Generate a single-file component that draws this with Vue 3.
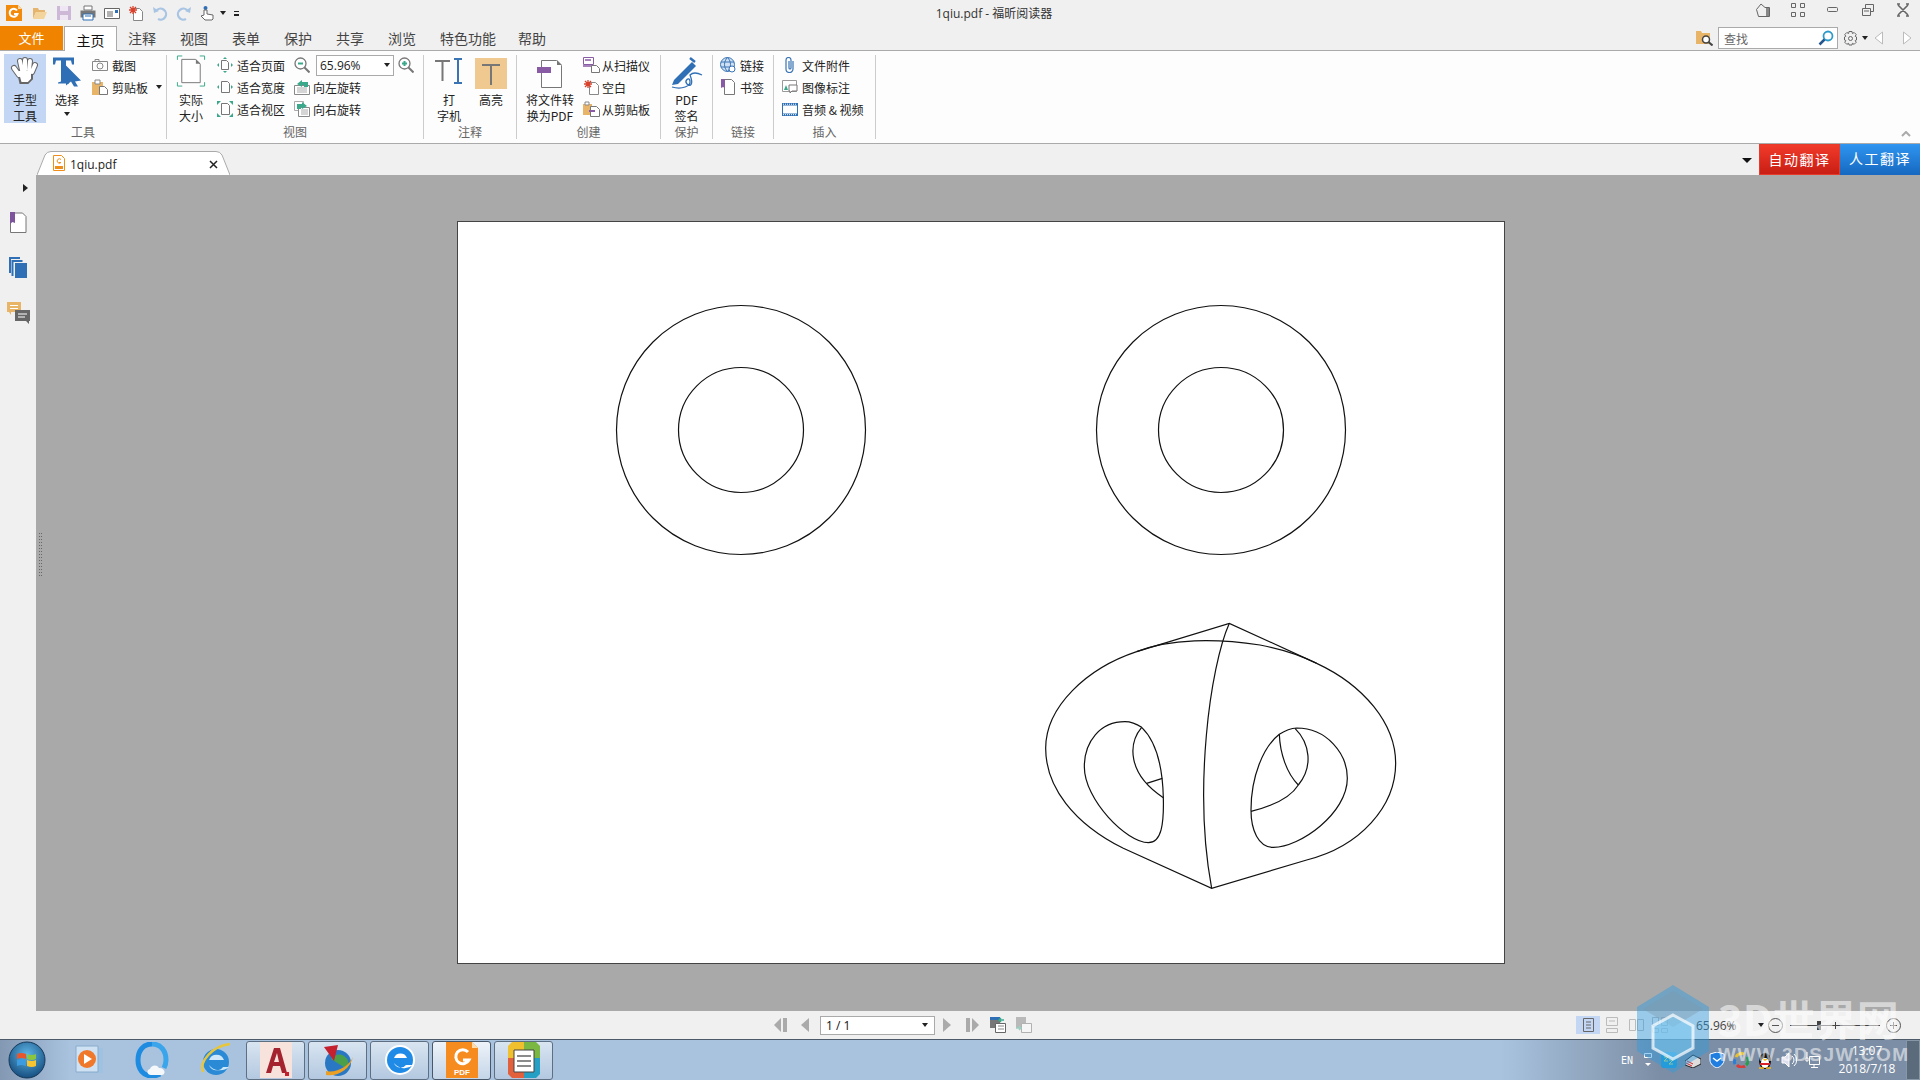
<template>
  <div class="app">
    <!-- title bar -->
    <div class="titlebar">
      <div class="qat">
        <svg class="logo" width="16" height="16" viewBox="0 0 16 16"><path d="M0 0h12l4 4v12H0z" fill="#f28a0c"/><path d="M12 0l4 4h-4z" fill="#fbd9a8"/><path d="M11 5.5a4 4 0 1 0 .5 3.5H8" fill="none" stroke="#fff" stroke-width="2"/></svg>
        <svg width="16" height="16" viewBox="0 0 16 16"><path d="M1 3h5l1 2h6v2H4L1 14z" fill="#e5b56d"/><path d="M1 14l3-7h11l-3 7z" fill="#f3d49c"/></svg>
        <svg width="16" height="16" viewBox="0 0 16 16"><path d="M1 1h14v14H1z" fill="#cdb8d8"/><path d="M4 1h8v5H4z" fill="#eee6f2"/><path d="M4 10h8v5H4z" fill="#eee6f2"/></svg>
        <svg width="16" height="16" viewBox="0 0 16 16"><path d="M4 1h8v4H4z" fill="#fff" stroke="#777"/><path d="M0.500 5.500h15v7h-15z" fill="#777"/><path d="M3 9h10v6H3z" fill="#fff" stroke="#2f6fb5"/><path d="M5 11h6" stroke="#2f6fb5"/></svg>
        <svg width="16" height="16" viewBox="0 0 16 16"><path d="M.5 3.500h15v10H.5z" fill="#fff" stroke="#666"/><path d="M3 7h6M3 9h6M3 11h6" stroke="#666"/><path d="M11 5h3v3h-3z" fill="#2f6fb5"/></svg>
        <svg width="16" height="16" viewBox="0 0 16 16"><path d="M5.500 3.500h6l3 3v9h-9z" fill="#fff" stroke="#888"/><path d="M5 1v8M1 5h8M2 2l6 6M8 2l-6 6" stroke="#d9412b" stroke-width="1.300"/></svg>
        <svg width="16" height="16" viewBox="0 0 16 16"><path d="M4 6a5.500 5.500 0 1 1 2 8" fill="none" stroke="#a9c5e4" stroke-width="2.200"/><path d="M1 2l1 6 5-2z" fill="#a9c5e4"/></svg>
        <svg width="16" height="16" viewBox="0 0 16 16"><path d="M12 6a5.500 5.500 0 1 0-2 8" fill="none" stroke="#a9c5e4" stroke-width="2.200"/><path d="M15 2l-1 6-5-2z" fill="#a9c5e4"/></svg>
        <svg width="16" height="16" viewBox="0 0 16 16"><circle cx="5.500" cy="3" r="2" fill="#2f6fb5"/><path d="M4 5h3v4l6 1v4l-1 1H5l-4-4 3-1z" fill="#fff" stroke="#666"/></svg>
        <i class="caret caret-qat"></i>
        <span class="qat-more"></span>
      </div>
      <div class="doc-title">1qiu.pdf - 福昕阅读器</div>
      <div class="winctl">
        <svg width="14" height="14" viewBox="0 0 14 14"><path d="M.5 6.500L5 1l4 3.500h4.500v9H2.500z" fill="none" stroke="#666"/><path d="M10 5h3v8h-3z" fill="#888"/></svg>
        <svg width="14" height="14" viewBox="0 0 14 14" fill="none" stroke="#666"><path d="M.5.500h4v4h-4zM9.500.500h4v4h-4zM.5 9.500h4v4h-4zM9.500 9.500h4v4h-4z"/></svg>
        <svg width="14" height="14" viewBox="0 0 14 14" fill="none" stroke="#666"><rect x="1.500" y="4.500" width="10" height="4" rx="1"/></svg>
        <svg width="14" height="14" viewBox="0 0 14 14" fill="none" stroke="#666"><path d="M1.500 5.500h8v7h-8zM4.500 5V1.500h8v7H10"/><path d="M3 8h5" /></svg>
        <svg width="14" height="14" viewBox="0 0 14 14" fill="none" stroke="#666" stroke-width="1.600"><path d="M2 2l10 10M12 2L2 12M1 1h3M10 1h3M1 13h3M10 13h3"/></svg>
      </div>
    </div>

    <!-- menu row -->
    <div class="menubar">
      <div class="file-tab">文件</div>
      <div class="home-tab">主页</div>
      <div v-for="m in menus" :key="m" class="menu-item">{{ m }}</div>
      <div class="menu-right">
        <svg width="17" height="16" viewBox="0 0 17 16"><path d="M0 1h5l1 2h8v11H0z" fill="#e8b468"/><circle cx="10" cy="9.500" r="3.500" fill="#fff" stroke="#444" stroke-width="1.500"/><path d="M12.500 12l4 3.500" stroke="#444" stroke-width="2"/></svg>
        <div class="search">
          <span>查找</span>
          <svg width="16" height="16" viewBox="0 0 16 16"><circle cx="10" cy="6" r="4.500" fill="#fff" stroke="#2e9ac9" stroke-width="1.800"/><path d="M6.500 9.500L1.500 14.500" stroke="#23568f" stroke-width="2.500"/></svg>
        </div>
        <svg class="gear" width="15" height="15" viewBox="0 0 15 15" fill="none" stroke="#666"><circle cx="7.500" cy="7.500" r="2"/><path d="M6 .5h3l.4 2 1.800-1 2 2-1 1.800 1.300.7v3l-1.300.5 1 1.800-2 2-1.800-1-.4 1.700H6l-.4-1.700-1.800 1-2-2 1-1.800-1.300-.5V6l1.300-.7-1-1.800 2-2 1.800 1z"/></svg>
        <i class="caret"></i>
        <svg class="back" width="10" height="14" viewBox="0 0 10 14"><path d="M8.500 1v12L1 7z" fill="#fff" stroke="#bbb"/></svg>
        <svg class="fwd" width="10" height="14" viewBox="0 0 10 14"><path d="M1.500 1v12L9 7z" fill="#fff" stroke="#bbb"/></svg>
      </div>
    </div>

    <!-- ribbon -->
    <div class="ribbon">
      <section class="group g-tools">
        <div class="body">
          <div class="tall hand">
            <svg class="ico" width="30" height="30" viewBox="0 0 30 30" fill="none" stroke-linecap="round">
              <g stroke="#666" stroke-width="6"><path d="M4 13l5 7M10 6l2 9M15 5v10M20 6l-1 9M25 10l-3 7"/><path d="M10 17h10v6l-3 3h-5z" fill="#666"/></g>
              <g stroke="#fff" stroke-width="4"><path d="M4 13l5 7M10 6l2 9M15 5v10M20 6l-1 9M25 10l-3 7"/><path d="M11 18h8v5l-2 2h-4z" fill="#fff"/></g>
            </svg>
            <span>手型</span><span>工具</span>
          </div>
          <div class="tall select">
            <svg class="ico" width="29" height="30" viewBox="0 0 29 30"><path d="M0 1h21v7h-2l-1-4h-5v21l3 1v1H5v-1l3-1V4H3L2 8H0z" fill="#2f6fb5"/><path d="M13 9l15 15-6 1 3 5h-4l-3-5-5 4z" fill="#2f6fb5"/></svg>
            <span>选择</span>
            <i class="caret caret-under"></i>
          </div>
          <div class="col col-tools">
            <div class="srow">
              <svg width="16" height="14" viewBox="0 0 16 14" fill="none" stroke="#888"><path d="M.5 3.500h15v9H.5z"/><circle cx="8" cy="8" r="3"/><path d="M3 3V1.500h4V3"/></svg>
              <span>截图</span>
            </div>
            <div class="srow">
              <svg width="16" height="16" viewBox="0 0 16 16"><path d="M0 3h11v13H0z" fill="#e8b468"/><path d="M3 1h5v4H3z" fill="#fff" stroke="#888"/><path d="M7.500 7.500h5l3 3v5h-8z" fill="#fff" stroke="#777"/></svg>
              <span>剪贴板</span>
              <i class="caret caret-clip"></i>
            </div>
          </div>
        </div>
        <div class="label">工具</div>
      </section>

      <section class="group g-view">
        <div class="body">
          <div class="tall actual">
            <svg class="ico" width="30" height="34" viewBox="0 0 30 34" fill="none">
              <path d="M1 5V1h5M24 1h5v4M1 28v4h5M24 32h5v-4" stroke="#3aa88a"/>
              <path d="M5.500 4.500h14l5 5v19h-19z" fill="#fff" stroke="#777"/><path d="M20 4l5 5h-5z" fill="#777"/>
            </svg>
            <span>实际</span><span>大小</span>
          </div>
          <div class="col col-fit">
            <div class="srow"><svg width="16" height="16" viewBox="0 0 16 16"><path d="M4.500 3.500h5l2 2v7h-7z" fill="#fff" stroke="#777"/><path d="M8 0l2 2H6zM8 16l-2-2h4zM0 8l2-2v4zM16 8l-2-2v4z" fill="#3aa88a"/></svg><span>适合页面</span></div>
            <div class="srow"><svg width="16" height="16" viewBox="0 0 16 16"><path d="M4.500 2.500h6l2 2v9h-8z" fill="#fff" stroke="#777"/><path d="M0 8l2-2v4zM16 8l-2-2v4z" fill="#3aa88a"/></svg><span>适合宽度</span></div>
            <div class="srow"><svg width="16" height="16" viewBox="0 0 16 16"><path d="M4.500 2.500h6l2 2v9h-8z" fill="#fff" stroke="#777"/><path d="M0 0h4L0 4zM16 0v4l-4-4zM0 16v-4l4 4zM16 16h-4l4-4z" fill="#3aa88a"/></svg><span>适合视区</span></div>
          </div>
          <div class="col col-zoom">
            <div class="srow">
              <svg width="16" height="16" viewBox="0 0 16 16"><circle cx="6.500" cy="6.500" r="5.500" fill="#fff" stroke="#777" stroke-width="1.300"/><path d="M4 6.500h5" stroke="#3aa88a" stroke-width="2"/><path d="M10.500 10.500l5 5" stroke="#777" stroke-width="2"/></svg>
              <div class="zoombox"><span>65.96%</span><i class="caret"></i></div>
              <svg width="16" height="16" viewBox="0 0 16 16"><circle cx="6.500" cy="6.500" r="5.500" fill="#fff" stroke="#777" stroke-width="1.300"/><path d="M4 6.500h5M6.500 4v5" stroke="#3aa88a" stroke-width="2"/><path d="M10.500 10.500l5 5" stroke="#777" stroke-width="2"/></svg>
            </div>
            <div class="srow"><svg width="16" height="16" viewBox="0 0 16 16"><path d="M.5 6.500h15v9H.5z" fill="#fff" stroke="#888"/><path d="M3 9h10M3 11h10M3 13h10" stroke="#aaa"/><path d="M3 5l5-4v2h6v5h-4V6H8v2z" fill="#3aa88a"/></svg><span>向左旋转</span></div>
            <div class="srow"><svg width="16" height="16" viewBox="0 0 16 16"><path d="M.5.500h9v9h-9z" fill="#fff" stroke="#aaa"/><path d="M4.500 6.500h11v9h-11z" fill="#fff" stroke="#888"/><path d="M7 9h7M7 11h7M7 13h7" stroke="#aaa"/><path d="M13 5L8 1v2H3v5h4V6h1v2z" fill="#3aa88a"/></svg><span>向右旋转</span></div>
          </div>
        </div>
        <div class="label">视图</div>
      </section>

      <section class="group g-annot">
        <div class="body">
          <div class="tall typewriter">
            <svg class="ico" width="30" height="26" viewBox="0 0 30 26" fill="none"><path d="M1 3h15M8.500 3v20" stroke="#777" stroke-width="2"/><path d="M20 1h8M20 25h8M24 1v24" stroke="#3a74b5" stroke-width="2"/></svg>
            <span>打</span><span>字机</span>
          </div>
          <div class="tall highlight">
            <div class="hl-box"><svg width="20" height="24" viewBox="0 0 20 24" fill="none" stroke="#777" stroke-width="2"><path d="M1 3h18M10 3v20"/></svg></div>
            <span>高亮</span>
          </div>
        </div>
        <div class="label">注释</div>
      </section>

      <section class="group g-create">
        <div class="body">
          <div class="tall topdf">
            <svg class="ico" width="26" height="30" viewBox="0 0 26 30"><path d="M4.500 1.500h15l5 5v22h-20z" fill="#fff" stroke="#777"/><path d="M20 1l5 5h-5z" fill="#777"/><path d="M0 8h14v6H0z" fill="#8a5ba5"/></svg>
            <span>将文件转</span><span>换为PDF</span>
          </div>
          <div class="col col-create">
            <div class="srow"><svg width="17" height="16" viewBox="0 0 17 16"><path d="M.5.500h10v7H.5z" fill="#fff" stroke="#8a5ba5"/><path d="M2 3h6M0 9h10" stroke="#8a5ba5" stroke-width="1.500"/><path d="M8.500 8.500h5l3 3v4h-8z" fill="#fff" stroke="#777"/></svg><span>从扫描仪</span></div>
            <div class="srow"><svg width="17" height="16" viewBox="0 0 17 16"><path d="M6.500 3.500h6l3 3v9h-9z" fill="#fff" stroke="#888"/><path d="M5 1v8M1 5h8M2 2l6 6M8 2l-6 6" stroke="#d9412b" stroke-width="1.300"/></svg><span>空白</span></div>
            <div class="srow"><svg width="17" height="16" viewBox="0 0 17 16"><path d="M0 3h9v11H0z" fill="#e8b468"/><path d="M2 1h4v3H2z" fill="#fff" stroke="#888"/><path d="M7.500 5.500h6l3 3v7h-9z" fill="#fff" stroke="#777"/><path d="M6 10h6" stroke="#8a5ba5" stroke-width="2"/></svg><span>从剪贴板</span></div>
          </div>
        </div>
        <div class="label">创建</div>
      </section>

      <section class="group g-protect">
        <div class="body">
          <div class="tall sign">
            <svg class="ico" width="32" height="33" viewBox="0 0 32 33" fill="none"><path d="M3 23L21 5l4 4L7 27l-6 1z" fill="#2f6fb5"/><path d="M19 1l5 4" stroke="#2f6fb5" stroke-width="2.500"/><path d="M1 30c10 3 19-1 18-6s-6 0-3 3 7 1 3-9c3-3 8-2 12 0" stroke="#2f6fb5" stroke-width="1.300"/></svg>
            <span>PDF</span><span>签名</span>
          </div>
        </div>
        <div class="label">保护</div>
      </section>

      <section class="group g-link">
        <div class="body">
          <div class="col col-link">
            <div class="srow"><svg width="16" height="16" viewBox="0 0 16 16" fill="none"><circle cx="7.500" cy="7.500" r="7" fill="#cfe0f2" stroke="#3a74b5"/><path d="M1 5h13M1 10h13M7.500 .5c-4 4-4 10 0 14M7.500 .5c4 4 4 10 0 14" stroke="#3a74b5"/><circle cx="12" cy="12" r="3" fill="#fff" stroke="#3a74b5"/></svg><span>链接</span></div>
            <div class="srow"><svg width="16" height="16" viewBox="0 0 16 16"><path d="M4.500 .5h7l3 3v12h-10z" fill="#fff" stroke="#777"/><path d="M1 0h4v9L3 8 1 9z" fill="#8a5ba5"/></svg><span>书签</span></div>
          </div>
        </div>
        <div class="label">链接</div>
      </section>

      <section class="group g-insert">
        <div class="body">
          <div class="col col-insert">
            <div class="srow"><svg width="16" height="16" viewBox="0 0 16 16" fill="none"><path d="M11 4v8a3.500 3.500 0 0 1-7 0V3a2.300 2.300 0 0 1 5 0v8a1 1 0 0 1-2 0V4" stroke="#3a74b5" stroke-width="1.200"/></svg><span>文件附件</span></div>
            <div class="srow"><svg width="16" height="16" viewBox="0 0 16 16"><path d="M.5 1.500h14v11H.5z" fill="#fff" stroke="#999"/><path d="M2 11l2-5 2 5z" fill="#3aa88a"/><path d="M7 6h8v6h-5l-2 2v-2H7z" fill="#fff" stroke="#777"/></svg><span>图像标注</span></div>
            <div class="srow"><svg width="16" height="13" viewBox="0 0 16 13"><path d="M.5 .5h15v12H.5z" fill="#fff" stroke="#2f6fb5"/><path d="M0 0h16v2.500H0zM0 10.500h16V13H0z" fill="#2f6fb5"/><path d="M1 1.200h14M1 11.700h14" stroke="#fff" stroke-dasharray="1 1"/></svg><span class="av">音频 &amp; 视频</span></div>
          </div>
        </div>
        <div class="label">插入</div>
      </section>
      <svg class="collapse" width="10" height="6" viewBox="0 0 10 6" fill="none" stroke="#aaa" stroke-width="2"><path d="M1 5l4-4 4 4"/></svg>
    </div>

    <!-- document tabs -->
    <div class="tabstrip">
      <div class="doc-tab">
        <svg class="tabshape" width="193" height="24" viewBox="0 0 193 24"><path d="M0 24L8 4q2-3.500 6-3.500h165q4 0 6 3.500l8 20" fill="#fff" stroke="#aaa"/></svg>
        <svg class="tab-ico" width="12" height="16" viewBox="0 0 12 16"><path d="M.5.500h8l3 3v12H.5z" fill="#fff" stroke="#ef8f1a"/><path d="M8 4.500a2.200 2.200 0 1 0 0 3H6" fill="none" stroke="#ef8f1a"/><path d="M2 11h8v3H2z" fill="#ef8f1a"/></svg>
        <span class="tab-name">1qiu.pdf</span>
        <svg class="tab-x" width="9" height="9" viewBox="0 0 9 9" stroke="#222" stroke-width="1.500"><path d="M1 1l7 7M8 1L1 8"/></svg>
      </div>
      <i class="caret caret-tabs"></i>
      <div class="btn-red">自动翻译</div>
      <div class="btn-blue">人工翻译</div>
    </div>

    <!-- main -->
    <div class="main">
      <aside class="side">
        <i class="side-arrow"></i>
        <svg width="18" height="22" viewBox="0 0 18 22"><path d="M1.500 1h12l3.500 3.500v16H1.500z" fill="#fff" stroke="#777"/><path d="M1 0h5v11L3.500 10 1 12z" fill="#7e559c"/></svg>
        <svg width="18" height="22" viewBox="0 0 18 22"><path d="M0 0h11v2H2v14H0z" fill="#2f6fb5"/><path d="M2.500 3h11v2h-9v14h-2z" fill="#2f6fb5"/><path d="M6 6h12v15H6z" fill="#2f6fb5"/></svg>
        <svg width="23" height="23" viewBox="0 0 23 23"><path d="M0 0h14v10H4v3l-2-3H0z" fill="#e8b468"/><path d="M3 3.500h8M3 6.500h8" stroke="#fff"/><path d="M8 8h15v11h-1v3l-3-3H8z" fill="#666"/><path d="M11 12h9M11 15h7" stroke="#fff"/></svg>
      </aside>
      <div class="viewer">
        <div class="grip"></div>
        <div class="page">
          <svg width="1046" height="741" viewBox="458 222 1046 741" fill="none" stroke="#111" stroke-width="1.200">
            <circle cx="741" cy="430" r="124.500"/>
            <circle cx="741" cy="430" r="62.500"/>
            <circle cx="1221" cy="430" r="124.500"/>
            <circle cx="1221" cy="430" r="62.500"/>
            <g transform="translate(1030 610) scale(.33333)" stroke-width="3.600">
              <path d="M320 125C420 85 560 85 690 105C760 118 820 140 860 160C1000 225 1097 340 1097 460C1097 590 990 710 830 750L545 835L280 715C130 640 47 530 47 415C47 290 170 175 320 125Z"/>
              <path d="M320 125L598 40L860 160"/>
              <path d="M598 40C540 170 490 540 545 835"/>
              <path d="M285 335C210 335 163 395 163 470C163 570 290 698 355 698C395 698 402 640 400 563C398 480 385 400 335 352C320 342 305 335 285 335Z"/>
              <path d="M335 352C295 400 290 490 400 563"/>
              <path d="M350 520L397 505"/>
              <path d="M800 354C890 354 952 430 952 505C952 610 810 712 730 712C685 712 663 660 663 600C663 500 700 410 748 373C765 362 780 355 800 354Z"/>
              <path d="M795 355C840 400 850 470 805 525"/>
              <path d="M748 373C750 430 770 490 805 525"/>
              <path d="M663 604C720 590 780 565 805 525"/>
            </g>
          </svg>
        </div>
      </div>
    </div>

    <!-- status bar -->
    <div class="statusbar">
      <div class="nav">
        <svg width="13" height="14" viewBox="0 0 13 14" fill="#aaa"><path d="M7 0v14L0 7z"/><path d="M9 0h4v14H9z" /></svg>
        <svg class="n-prev" width="8" height="14" viewBox="0 0 8 14" fill="#aaa"><path d="M8 0v14L0 7z"/></svg>
        <div class="pagebox"><span>1 / 1</span><i class="caret"></i></div>
        <svg class="n-next" width="8" height="14" viewBox="0 0 8 14" fill="#aaa"><path d="M0 0v14l8-7z"/></svg>
        <svg class="n-last" width="13" height="14" viewBox="0 0 13 14" fill="#aaa"><path d="M0 0h4v14H0z"/><path d="M6 0v14l7-7z"/></svg>
        <svg class="n-two" width="16" height="16" viewBox="0 0 16 16"><path d="M0 0h10v11H0z" fill="#777"/><path d="M0 0h10v3H0z" fill="#2f6fb5"/><path d="M5.500 6.500h10v9h-10z" fill="#fff" stroke="#666"/><path d="M8 9h6M8 12h6" stroke="#888"/><path d="M14 3H9M11 1L9 3l2 2" stroke="#3aa88a" stroke-width="1.500" fill="none"/></svg>
        <svg class="n-three" width="16" height="16" viewBox="0 0 16 16" opacity=".45"><path d="M0 0h10v11H0z" fill="#777"/><path d="M5.500 6.500h10v9h-10z" fill="#fff" stroke="#666"/><path d="M0 11h5M3 9l2 2-2 2" stroke="#3aa88a" stroke-width="1.500" fill="none"/></svg>
      </div>
      <div class="view-modes">
        <div class="vm vm-on"><svg width="11" height="14" viewBox="0 0 11 14" fill="none" stroke="#666"><path d="M.5.500h10v13H.5zM3 4h5M3 7h5M3 10h5"/></svg></div>
        <div class="vm"><svg width="12" height="16" viewBox="0 0 12 16" fill="none" stroke="#bbb"><path d="M.5.500h11v8H.5zM.5 11.500h11v4H.5zM3 4h6"/></svg></div>
        <div class="vm"><svg width="15" height="12" viewBox="0 0 15 12" fill="none" stroke="#bbb"><path d="M.5.500h6v11h-6zM8.500.500h6v11h-6z"/></svg></div>
        <div class="vm"><svg width="16" height="16" viewBox="0 0 16 16" fill="none" stroke="#bbb"><path d="M.5.500h6v8h-6zM9.500.500h6v8h-6zM.5 11.500h6v4h-6zM9.500 11.500h6v4h-6z"/></svg></div>
      </div>
      <span class="pct">65.96%</span>
      <i class="caret caret-pct"></i>
      <svg width="15" height="15" viewBox="0 0 15 15" fill="none" stroke="#555"><circle cx="7.500" cy="7.500" r="7"/><path d="M4 7.500h7"/></svg>
      <div class="slider"><span class="thumb"></span><span class="tick"></span></div>
      <svg width="15" height="15" viewBox="0 0 15 15" fill="none" stroke="#555"><circle cx="7.500" cy="7.500" r="7"/><path d="M4 7.500h7M7.500 4v7"/></svg>
    </div>

    <!-- windows taskbar -->
    <div class="taskbar">
      <svg class="orb" width="38" height="38" viewBox="0 0 38 38">
        <defs><radialGradient id="orbg" cx=".5" cy=".35" r=".75"><stop offset="0" stop-color="#5db5e6"/><stop offset="1" stop-color="#0b3f70"/></radialGradient></defs>
        <circle cx="19" cy="19" r="18" fill="url(#orbg)" stroke="#16385a"/>
        <path d="M9 13q4-2 9 0v5q-5-2-9 0z" fill="#e8562d"/><path d="M19 13q5 2 9 0v5q-4 2-9 0z" fill="#8cc63f"/>
        <path d="M9 19q4-2 9 0v6q-5-2-9 0z" fill="#3d9be0"/><path d="M19 19q5 2 9 0v6q-4 2-9 0z" fill="#f6c531"/>
      </svg>
      <div class="pin pin-media"><svg width="30" height="30" viewBox="0 0 30 30"><path d="M8 3h22v25H8z" fill="#9fc2e0"/><path d="M3 1h22v26H3z" fill="#cfe2f3" stroke="#88aacc"/><circle cx="14" cy="14" r="9" fill="#f0782a"/><path d="M11 9l8 5-8 5z" fill="#fff"/></svg></div>
      <div class="pin pin-q"><svg width="34" height="36" viewBox="0 0 34 36"><path d="M17 2C8 2 3 9 3 18s5 16 14 16c3 0 6-1 8-2" fill="none" stroke="#1c8be0" stroke-width="5"/><path d="M17 2c9 0 14 7 14 16 0 3-1 6-2 8" fill="none" stroke="#3aa5ea" stroke-width="5"/><path d="M16 33c-4 0-5-5-1-6 1-4 7-5 9-1 5-1 8 6 3 7z" fill="#f4f8fb"/></svg></div>
      <div class="pin pin-ie"><svg width="34" height="36" viewBox="0 0 34 36"><circle cx="18" cy="20" r="13" fill="#2a8ad6"/><path d="M11 18h15a8 8 0 0 0-15 0zM11 23a8 8 0 0 0 14 2h6a14 14 0 0 1-20-2z" fill="#cfe8f9"/><path d="M5 30C1 20 14 4 32 2" fill="none" stroke="#e8c63c" stroke-width="2.500"/></svg></div>
      <div class="tbtn"><svg width="32" height="36" viewBox="0 0 32 36"><path d="M0 0h32v36H0z" fill="#f7e3dc"/><path d="M6 31L14 6h6l7 25h-5l-2-7h-7l-2 7zM14 20h5l-2-9z" fill="#a5232e" fill-rule="evenodd"/><path d="M25 30h4v4h-4z" fill="#c4202e"/></svg></div>
      <div class="tbtn"><svg width="32" height="34" viewBox="0 0 32 34"><circle cx="16" cy="20" r="13" fill="#2a78c4"/><path d="M9 16a9 9 0 0 1 16 10z" fill="#4aa04a"/><path d="M2 4l14-2-4 16z" fill="#c4202e"/><path d="M4 28c10 3 24-6 27-14-3 12-15 20-27 18z" fill="#eb9f25"/></svg></div>
      <div class="tbtn"><svg width="32" height="34" viewBox="0 0 32 34"><circle cx="16" cy="17" r="15" fill="#fff"/><circle cx="16" cy="17" r="13" fill="#1f8be6"/><path d="M10 15h13a7 7 0 0 0-13 0zM10 20a7 7 0 0 0 12 2h7a13 13 0 0 1-19-2z" fill="#fff"/></svg></div>
      <div class="tbtn tbtn-on"><svg width="32" height="36" viewBox="0 0 32 36"><path d="M0 0h26l6 6v30H0z" fill="#f68b1f"/><path d="M26 0l6 6h-6z" fill="#fddcb0"/><path d="M22 10a7 7 0 1 0 1 8h-6" fill="none" stroke="#fff" stroke-width="3"/><text x="16" y="33" font-size="8" font-weight="700" fill="#fff" text-anchor="middle" font-family="Liberation Sans">PDF</text></svg></div>
      <div class="tbtn"><svg width="32" height="36" viewBox="0 0 32 36"><path d="M4 0h12v16H0V4z" fill="#f1c02e"/><path d="M16 0h12l4 4v12H16z" fill="#7bb743"/><path d="M0 16h16v20H4l-4-4z" fill="#e2603c"/><path d="M16 16h16v16l-4 4H16z" fill="#25a0c4"/><path d="M6 8h20v22H6z" fill="#fff" stroke="#444"/><path d="M9 14h14M9 19h14M9 24h14" stroke="#666" stroke-width="1.500"/></svg></div>
      <div class="tray">
        <span class="en">EN</span>
        <svg width="10" height="16" viewBox="0 0 10 16"><path d="M1.500 1.500h7v4h-7z" fill="none" stroke="#fff"/><path d="M2 11h6l-3 3z" fill="#fff"/></svg>
        <svg width="16" height="16" viewBox="0 0 16 16"><rect width="16" height="16" rx="3" fill="#1d9bd8"/><path d="M3 5h4L3 9h4M8 8h4l-4 4h4" fill="none" stroke="#d8e86a"/></svg>
        <svg width="16" height="16" viewBox="0 0 16 16"><path d="M0 9l8-6 8 4v5l-8 4-8-3z" fill="#ddd" stroke="#222"/><path d="M1 11l6 3M2 9l6 3" stroke="#d22"/></svg>
        <svg width="16" height="16" viewBox="0 0 16 16"><path d="M8 0l7 2v6c0 4-4 7-7 8-3-1-7-4-7-8V2z" fill="#1f7ee0" stroke="#fff"/><path d="M4 6l4 3 4-3" fill="none" stroke="#fff" stroke-width="1.500"/></svg>
        <svg width="16" height="16" viewBox="0 0 16 16" fill="none" stroke-width="3"><path d="M3 5a6 6 0 0 1 8-3" stroke="#e6c12d"/><path d="M14 5a6 6 0 0 1-1 8" stroke="#2a9d4a"/><path d="M12 14a6 6 0 0 1-8-1" stroke="#d93a3a"/><path d="M2 12a6 6 0 0 1 0-5" stroke="#2a7ed6"/></svg>
        <svg width="16" height="17" viewBox="0 0 16 17"><ellipse cx="8" cy="9" rx="6" ry="8" fill="#111"/><ellipse cx="8" cy="11" rx="4" ry="5" fill="#fff"/><path d="M5 7h6l-3 2z" fill="#f5b81e"/><path d="M3 11h10v2H3z" fill="#d8232a"/><path d="M2 16h5M9 16h5" stroke="#f5b81e" stroke-width="1.500"/></svg>
        <svg width="16" height="16" viewBox="0 0 16 16" fill="none" stroke="#fff"><path d="M1 5h3l4-4v14l-4-4H1z" fill="#dde"/><path d="M11 4a5 5 0 0 1 0 8M13 2a8 8 0 0 1 0 12"/></svg>
        <svg width="16" height="16" viewBox="0 0 16 16" fill="none" stroke="#fff"><path d="M4.500 4.500h10v8h-10zM9 13v2M6 15.500h7M2 0v6M1 6h2v3H1z"/></svg>
      </div>
      <div class="clock"><span>13:07</span><span>2018/7/18</span></div>
      <div class="show-desktop"></div>
    </div>

    <!-- site watermark over the screenshot -->
    <div class="watermark">
      <svg class="wm-logo" width="72" height="88" viewBox="0 0 72 88">
        <path d="M36 0l36 22v44L36 88 0 66V22z" fill="#2f9be0" opacity=".45"/>
        <path d="M36 6l30 18L36 42 6 24z" fill="#7f98ad" opacity=".4"/>
        <path d="M36 30l20 11v22L36 74 16 63V41z" fill="#7cc9f0" opacity=".55"/>
        <path d="M36 30l20 11v22L36 74 16 63V41z" fill="none" stroke="#fff" stroke-width="3" opacity=".7"/>
      </svg>
      <div class="wm-text">
        <div class="wm-big">3D世界网</div>
        <div class="wm-small">WWW.3DSJW.COM</div>
      </div>
    </div>
  </div>
</template>

<script setup>
const menus = ['注释', '视图', '表单', '保护', '共享', '浏览', '特色功能', '帮助']
</script>

<style>
html, body { margin: 0; padding: 0; background: #f0f0f0; }
</style>

<style scoped>
* { box-sizing: border-box; }

.app {
  position: relative;
  width: 1920px;
  height: 1080px;
  overflow: hidden;
  display: flex;
  flex-direction: column;
  background: #f0f0f0;
  color: #222;
  font-family: "Noto Sans CJK SC", "Noto Sans", sans-serif;
  font-size: 12px;
}

svg { display: block; flex: none; }

.caret {
  display: block;
  flex: none;
  width: 0;
  height: 0;
  border-left: 3.5px solid transparent;
  border-right: 3.5px solid transparent;
  border-top: 4px solid #222;
}

/* title bar */
.titlebar {
  height: 26px;
  display: flex;
  align-items: center;
  position: relative;
}

.qat {
  display: flex;
  align-items: center;
  gap: 8px;
  padding-left: 6px;
}

.qat .logo { margin-right: 2px; }
.caret-qat { margin-left: -4px; }

.qat-more {
  width: 5px;
  height: 5px;
  border-top: 1px solid #222;
  background: linear-gradient(#222, #222) center 2px / 5px 3px no-repeat;
}

.doc-title {
  position: absolute;
  left: 0;
  right: 0;
  text-align: center;
  padding-left: 68px;
  font-family: "Open Sans", "Noto Sans CJK SC", sans-serif;
  font-size: 12px;
  color: #333;
}

.winctl {
  margin-left: auto;
  display: flex;
  gap: 21px;
  padding-right: 10px;
  margin-top: -6px;
}

/* menu row */
.menubar {
  height: 25px;
  display: flex;
  align-items: stretch;
  border-bottom: 1px solid #aaa;
  font-size: 14px;
}

.file-tab {
  width: 63px;
  background: #f08300;
  color: #fff;
  text-align: center;
  line-height: 24px;
  font-size: 13px;
}

.home-tab {
  width: 53px;
  margin-left: 1px;
  margin-right: -1px;
  margin-bottom: -1px;
  background: #fff;
  border: 1px solid #aaa;
  border-bottom: none;
  text-align: center;
  line-height: 26px;
  color: #111;
}

.menu-item {
  padding: 0 12px;
  line-height: 25px;
  color: #444;
}

.menu-item:nth-last-child(2) { margin-left: -2px; }

.menu-right {
  margin-left: auto;
  display: flex;
  align-items: center;
  padding-right: 8px;
}

.search {
  width: 120px;
  height: 22px;
  margin-left: 5px;
  padding: 0 3px 0 5px;
  display: flex;
  align-items: center;
  justify-content: space-between;
  background: #fff;
  border: 1px solid #aaa;
  font-size: 12px;
  color: #666;
}

.gear { margin-left: 5px; }
.menu-right .caret { margin-left: 4px; }
.back { margin-left: 6px; }
.fwd { margin-left: 18px; }

/* ribbon */
.ribbon {
  position: relative;
  height: 93px;
  padding-top: 4px;
  display: flex;
  background: #fdfdfd;
  border-bottom: 1px solid #aaa;
}

.group {
  height: 84px;
  flex: none;
  border-right: 1px solid #ccc;
  display: flex;
  flex-direction: column;
}

.g-tools { width: 167px; }
.g-view { width: 257px; }
.g-annot { width: 93px; }
.g-create { width: 144px; }
.g-protect { width: 52px; }
.g-link { width: 61px; }
.g-insert { width: 102px; }

.body {
  height: 70px;
  display: flex;
}

.label {
  text-align: center;
  line-height: 14px;
  color: #666;
}

.tall {
  display: flex;
  flex-direction: column;
  align-items: center;
  flex: none;
  line-height: 16px;
}

.tall .ico {
  height: 37px;
  padding-bottom: 4px;
}

.hand {
  width: 42px;
  height: 69px;
  margin: -1px 0 0 4px;
  background: #c3d6f3;
  padding-top: 1px;
}

.hand .ico { height: 30px; margin-bottom: 7px; padding: 0; }

.select { width: 30px; margin-left: 6px; }
.caret-under { margin-top: 4px; }

.col { display: flex; flex-direction: column; margin-top: -1px; }

.srow {
  height: 22px;
  display: flex;
  align-items: center;
  gap: 4px;
  white-space: nowrap;
}

.col-tools { margin-left: 10px; }
.caret-clip { margin-left: 4px; }

.actual { width: 34px; margin-left: 7px; }
.col-fit { margin-left: 9px; width: 77px; }
.col-zoom .srow { gap: 3px; }

.zoombox {
  width: 78px;
  height: 21px;
  margin: 0 1px 0 3px;
  padding: 0 3px;
  display: flex;
  align-items: center;
  justify-content: space-between;
  background: #fff;
  border: 1px solid #aaa;
  font-family: "Open Sans", sans-serif;
}

.typewriter { width: 30px; margin-left: 10px; }
.typewriter .ico { height: 37px; padding: 3px 0 8px; }

.highlight { width: 32px; margin-left: 11px; }

.hl-box {
  width: 32px;
  height: 31px;
  margin: 3px 0 3px;
  display: flex;
  align-items: center;
  justify-content: center;
  background: #efc98f;
}

.topdf { width: 54px; margin-left: 6px; }
.topdf .ico { padding: 4px 0 3px; }
.topdf span { white-space: nowrap; }
.col-create { margin-left: 6px; }
.col-create .srow { gap: 2px; }

.sign { width: 51px; }
.sign .ico { padding: 2px 0 2px; }

.col-link { margin-left: 7px; }
.col-insert { margin-left: 8px; }

.collapse {
  position: absolute;
  right: 9px;
  top: 80px;
}

/* tabs */
.tabstrip {
  height: 31px;
  display: flex;
  align-items: flex-end;
}

.doc-tab {
  position: relative;
  width: 193px;
  height: 24px;
  margin-left: 37px;
  display: flex;
  align-items: center;
  padding-left: 16px;
}

.tabshape { position: absolute; left: 0; top: 0; }
.tab-ico, .tab-name, .tab-x { position: relative; }

.tab-name {
  margin-left: 5px;
  padding-top: 3px;
  font-family: "Open Sans", sans-serif;
  font-size: 12px;
}

.tab-x { margin-left: auto; margin-right: 12px; margin-top: 3px; }

.caret-tabs {
  margin: 0 7px 12px auto;
  border-left-width: 5px;
  border-right-width: 5px;
  border-top-width: 5px;
  border-top-color: #111;
}

.btn-red, .btn-blue {
  width: 81px;
  height: 31px;
  text-align: center;
  line-height: 29px;
  font-size: 14px;
  letter-spacing: 1.500px;
  color: #fff;
}

.btn-red { background: linear-gradient(#f03a2a, #c91e14); border: 1px solid #e63a2a; }
.btn-blue { width: 80px; background: linear-gradient(#2f95f0, #1668c0); }

/* main */
.main {
  height: 836px;
  display: flex;
}

.side {
  width: 36px;
  display: flex;
  flex-direction: column;
  align-items: center;
  padding-top: 9px;
}

.side-arrow {
  width: 0;
  height: 0;
  margin-left: 15px;
  border-top: 4.500px solid transparent;
  border-bottom: 4.500px solid transparent;
  border-left: 5px solid #222;
  margin-bottom: 20px;
}

.side svg { margin-bottom: 23px; }

.viewer {
  position: relative;
  flex: 1;
  background: #a9a9a9;
  padding: 47px 0 0 422px;
}

.grip {
  position: absolute;
  left: 3px;
  top: 358px;
  width: 3px;
  height: 44px;
  background-image:
    repeating-linear-gradient(#666 0 1px, transparent 1px 3px),
    repeating-linear-gradient(#666 0 1px, transparent 1px 3px);
  background-size: 1px 100%;
  background-position: 0 0, 2px 0;
  background-repeat: no-repeat;
}

.page {
  width: 1046px;
  height: 741px;
  background: #fff;
  outline: 1px solid #444;
}

/* status bar */
.statusbar {
  height: 29px;
  display: flex;
  align-items: center;
  padding-left: 774px;
  border-bottom: 1px solid #4c5a68;
  font-family: "Open Sans", sans-serif;
}

.nav { display: flex; align-items: center; }
.n-prev { margin-left: 14px; }

.pagebox {
  width: 115px;
  height: 19px;
  margin-left: 11px;
  padding: 0 6px 0 5px;
  display: flex;
  align-items: center;
  justify-content: space-between;
  background: #fff;
  border: 1px solid #aaa;
  color: #111;
}

.n-next { margin-left: 8px; }
.n-last { margin-left: 15px; }
.n-two { margin-left: 11px; }
.n-three { margin-left: 10px; }

.view-modes {
  display: flex;
  align-items: center;
  margin-left: 544px;
}

.vm {
  width: 24px;
  height: 18px;
  display: flex;
  align-items: center;
  justify-content: center;
}

.vm-on { background: #c3d6f3; }

.pct { margin-left: 24px; width: 44px; color: #444; }
.caret-pct { margin: 0 4px 0 18px; }

.slider {
  position: relative;
  width: 90px;
  height: 1px;
  margin: 0 6px 0 7px;
  background: #444;
}

.thumb {
  position: absolute;
  left: 27px;
  top: -4px;
  width: 4px;
  height: 9px;
  background: #444;
}

.tick {
  position: absolute;
  left: 45px;
  top: -3px;
  width: 1px;
  height: 7px;
  background: #444;
}

/* taskbar */
.taskbar {
  flex: 1;
  display: flex;
  align-items: center;
  background: linear-gradient(90deg, #8398b2 0, #a9c3df 70px, #a9c3df 1500px, #7c8ea5 1660px, #7c8ea5 100%);
}

.orb { margin-left: 8px; }

.pin {
  display: flex;
  justify-content: center;
  width: 62px;
}

.pin-media { margin-left: 11px; }
.pin-q { margin-left: 2px; }
.pin-ie { margin-left: 1px; }

.tbtn {
  width: 59px;
  height: 39px;
  margin-right: 3px;
  display: flex;
  align-items: center;
  justify-content: center;
  border: 1px solid #5f6f82;
  border-radius: 3px;
  background: linear-gradient(#d9e5f1, #b3c8e0);
}

.tbtn-on { background: linear-gradient(#eef3f9, #c4d5e8); border-color: #48576a; }

.tray {
  margin-left: auto;
  display: flex;
  align-items: center;
  gap: 8px;
  color: #fff;
}

.en {
  font-family: "DejaVu Sans Mono", monospace;
  font-size: 10px;
  margin-right: 2px;
}

.clock {
  width: 78px;
  margin-left: 7px;
  display: flex;
  flex-direction: column;
  align-items: center;
  line-height: 18px;
  color: #fff;
  font-family: "Open Sans", sans-serif;
  font-size: 12px;
}

.show-desktop {
  width: 14px;
  height: 100%;
  background: #5c6b7c;
  border: 1px solid #8897a8;
}

/* watermark */
.watermark {
  position: absolute;
  left: 1637px;
  top: 985px;
  display: flex;
  pointer-events: none;
}

.wm-text { margin-left: 9px; color: rgba(255, 255, 255, .55); }

.wm-big {
  margin-top: 8px;
  font-size: 42px;
  font-weight: 700;
  line-height: 50px;
  white-space: nowrap;
}

.wm-small {
  font-family: "Liberation Sans", sans-serif;
  font-size: 19px;
  font-weight: 700;
  letter-spacing: 1.500px;
  line-height: 24px;
  white-space: nowrap;
}
</style>
